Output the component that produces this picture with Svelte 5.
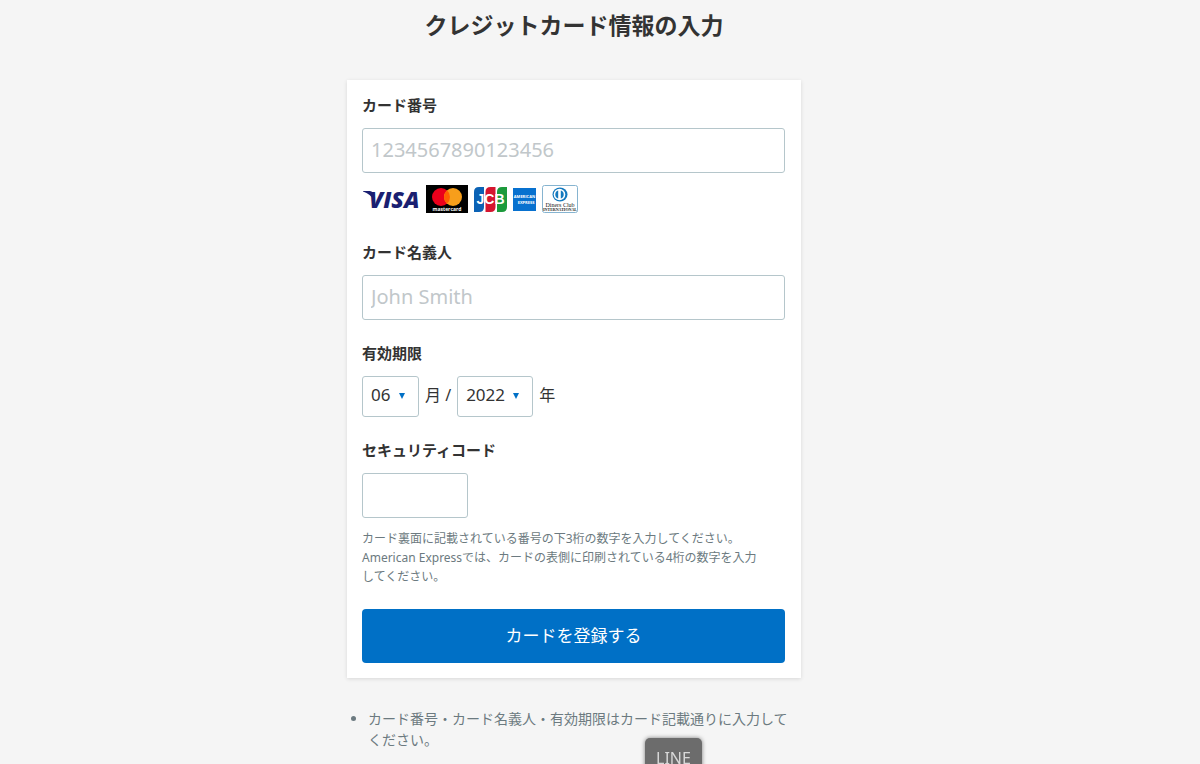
<script lang="ts">
  const months: string[] = Array.from({ length: 12 }, (_, i) => String(i + 1).padStart(2, '0'))
  const years: number[] = Array.from({ length: 10 }, (_, i) => 2022 + i)

  let cardNumber: string = $state('')
  let holder: string = $state('')
  let month: string = $state('06')
  let year: number = $state(2022)
  let code: string = $state('')
</script>

<main class="page">
  <h1>クレジットカード情報の入力</h1>

  <form class="card" onsubmit={(e) => e.preventDefault()}>
    <div class="field">
      <label for="number">カード番号</label>
      <input id="number" type="text" placeholder="1234567890123456" bind:value={cardNumber} />
      <div class="brands">
        <svg width="58" height="28" viewBox="0 0 58 28" role="img" aria-label="VISA">
          <path d="M1 6h7q2.500 0 3 2.500L12.500 16Q8.500 9 1 6.600z" fill="#1a1f71" />
          <text x="7" y="23" class="visa">VISA</text>
        </svg>
        <svg width="42" height="28" viewBox="0 0 42 28" role="img" aria-label="mastercard">
          <rect width="42" height="28" />
          <circle cx="15" cy="12" r="9" fill="#eb001b" />
          <circle cx="27" cy="12" r="9" fill="#f79e1b" />
          <path d="M21 5.300a9 9 0 0 1 0 13.400a9 9 0 0 1 0-13.400z" fill="#ff5f00" />
          <text x="21" y="26" class="mastercard">mastercard</text>
        </svg>
        <svg width="33" height="28" viewBox="0 0 33 28" role="img" aria-label="JCB">
          <path d="M0 27V7q0-5 5-5h5v20q0 5-5 5z" fill="#0b62b5" />
          <path d="M11.500 27V7q0-5 5-5h5v20q0 5-5 5z" fill="#d5152f" />
          <path d="M23 27V7q0-5 5-5h5v20q0 5-5 5z" fill="#1c9a3c" />
          <text x="16.500" y="19" class="jcb">JCB</text>
        </svg>
        <svg width="23" height="28" viewBox="0 0 23 28" role="img" aria-label="American Express">
          <rect y="3" width="23" height="23" fill="#0871cf" />
          <text x="11.500" y="13" class="amex">AMERICAN</text>
          <text x="13" y="19" class="amex">EXPRESS</text>
        </svg>
        <svg width="36" height="28" viewBox="0 0 36 28" role="img" aria-label="Diners Club International">
          <rect x="0.500" y="0.500" width="35" height="27" rx="2" fill="#fff" stroke="#86b4d0" />
          <ellipse cx="18" cy="9.500" rx="7.500" ry="7" fill="#1479be" />
          <circle cx="17.500" cy="9.500" r="5.800" fill="#fff" />
          <path d="M16.200 5.500a4.200 4.200 0 0 0 0 8zM18.800 5.500a4.200 4.200 0 0 1 0 8z" fill="#1479be" />
          <text x="18" y="21.500" class="diners">Diners Club</text>
          <text x="18" y="25.500" class="international">INTERNATIONAL</text>
        </svg>
      </div>
    </div>

    <div class="field">
      <label for="holder">カード名義人</label>
      <input id="holder" type="text" placeholder="John Smith" bind:value={holder} />
    </div>

    <div class="field">
      <label for="month">有効期限</label>
      <div class="expiry">
        <span class="select">
          <select id="month" bind:value={month}>
            {#each months as m}
              <option value={m}>{m}</option>
            {/each}
          </select>
        </span>
        <span class="unit">月 /</span>
        <span class="select">
          <select aria-label="年" bind:value={year}>
            {#each years as y}
              <option value={y}>{y}</option>
            {/each}
          </select>
        </span>
        <span class="unit">年</span>
      </div>
    </div>

    <div class="field">
      <label for="code">セキュリティコード</label>
      <input id="code" class="code" type="text" bind:value={code} />
      <p class="help">
        カード裏面に記載されている番号の下3桁の数字を入力してください。<br />
        American Expressでは、カードの表側に印刷されている4桁の数字を入力<br />
        してください。
      </p>
    </div>

    <button class="submit" type="submit">カードを登録する</button>
  </form>

  <ul class="notes">
    <li>カード番号・カード名義人・有効期限はカード記載通りに入力してください。</li>
  </ul>

  <button class="line" type="button">LINE</button>
</main>

<style>
  :global(body) {
    background: #f5f5f5;
  }

  .page {
    display: flex;
    flex-direction: column;
    align-items: center;
    padding: 9px 52px 0 0;
    color: #333;
    font-family: 'Noto Sans', 'Noto Sans CJK JP', sans-serif;
  }

  h1 {
    margin: 0 0 39px;
    font-size: 23px;
    line-height: 32px;
  }

  .card {
    box-sizing: border-box;
    width: 100%;
    max-width: 454px;
    padding: 15px 16px 15px 15px;
    background: #fff;
    box-shadow: 0 1px 4px rgba(0, 0, 0, 0.12);
  }

  .field {
    margin-bottom: 23px;
  }

  label {
    display: block;
    margin-bottom: 13px;
    font-size: 15px;
    font-weight: bold;
    line-height: 20px;
  }

  input,
  select {
    box-sizing: border-box;
    border: 1px solid #b5c6cb;
    border-radius: 3px;
    background: #fff;
    color: #333;
    font-family: inherit;
  }

  input {
    display: block;
    width: 100%;
    height: 45px;
    padding: 0 8px 2px;
    font-size: 20px;
  }

  input::placeholder {
    color: #c1c7ca;
  }

  .code {
    width: 106px;
  }

  .brands {
    display: flex;
    gap: 6px;
    margin-top: 12px;
    padding-bottom: 6px;
  }

  .brands svg {
    overflow: visible;
  }

  .brands text {
    font-family: 'Open Sans', sans-serif;
    font-weight: bold;
    text-anchor: middle;
  }

  .brands .visa {
    fill: #1a1f71;
    font-size: 23px;
    font-style: italic;
    font-weight: 800;
    text-anchor: start;
  }

  .brands .mastercard {
    fill: #fff;
    font-size: 5px;
  }

  .brands .jcb {
    fill: #fff;
    font-family: 'Liberation Sans', sans-serif;
    font-size: 14px;
  }

  .brands .amex {
    fill: #fff;
    font-size: 4px;
  }

  .brands .diners {
    fill: #222;
    font-family: 'Liberation Serif', serif;
    font-size: 6px;
    font-weight: normal;
  }

  .brands .international {
    fill: #222;
    font-family: 'Liberation Serif', serif;
    font-size: 4px;
  }

  .expiry {
    display: flex;
    align-items: center;
    gap: 6px;
  }

  .select {
    position: relative;
  }

  .select::after {
    content: '';
    position: absolute;
    top: 17px;
    right: 14px;
    border: 3px solid transparent;
    border-top: 6px solid #0070c6;
    border-bottom: 0;
    pointer-events: none;
  }

  select {
    display: block;
    height: 41px;
    padding: 0 27px 5px 8px;
    appearance: none;
    font-size: 17px;
  }

  .unit {
    padding-bottom: 5px;
    font-size: 16px;
  }

  .help {
    margin: 11px 0 0;
    color: #6c7a80;
    font-size: 12px;
    line-height: 19px;
  }

  .submit {
    display: block;
    width: 100%;
    height: 54px;
    padding: 0 0 3px;
    border: 0;
    border-radius: 4px;
    background: #0070c6;
    color: #fff;
    font-family: inherit;
    font-size: 17px;
  }

  .notes {
    box-sizing: border-box;
    width: 100%;
    max-width: 454px;
    margin: 30px 0 0;
    padding: 0 12px 0 21px;
    color: #6c7a80;
    font-size: 14px;
    line-height: 21px;
  }

  /* Floating over the page, partly below the fold */
  .line {
    position: fixed;
    bottom: -14px;
    left: calc(50% + 45px);
    width: 57px;
    height: 40px;
    padding: 0;
    border: 0;
    border-radius: 5px;
    background: #6c6c6c;
    box-shadow: 0 0 4px rgba(0, 0, 0, 0.5);
    color: #d8d8d8;
    font-family: inherit;
    font-size: 16px;
  }
</style>
